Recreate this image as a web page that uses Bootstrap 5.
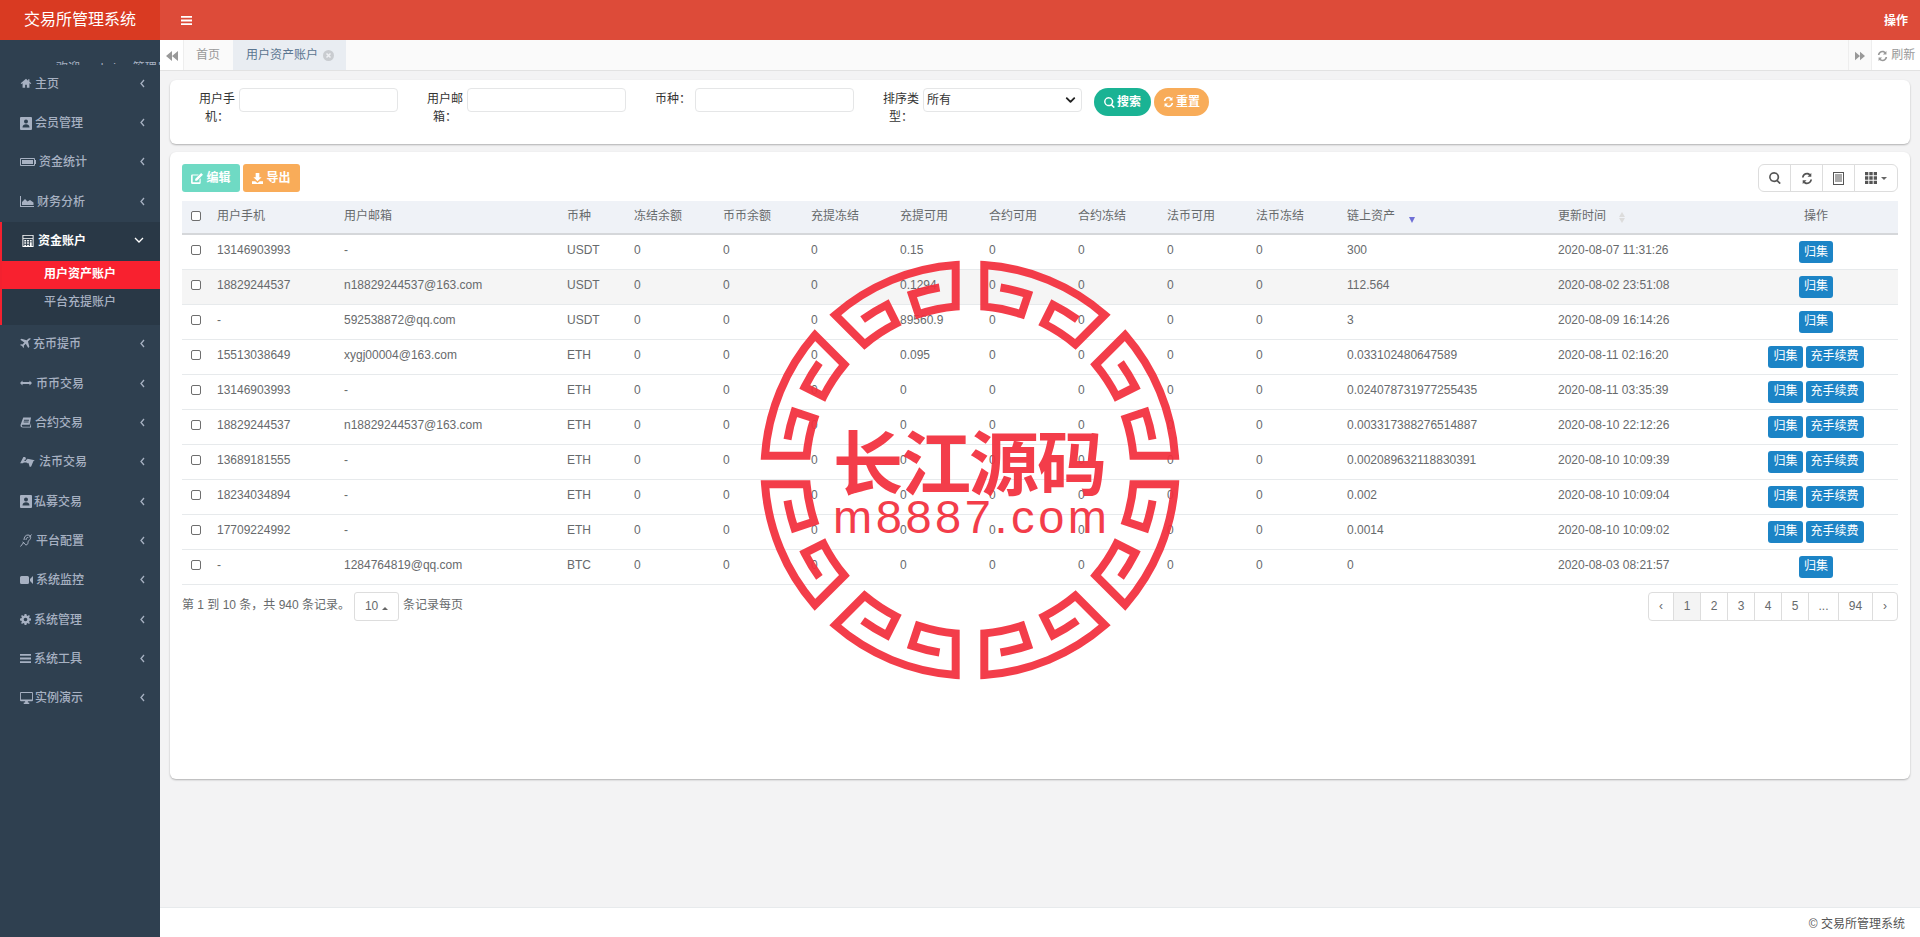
<!DOCTYPE html>
<html lang="zh-CN">
<head>
  <meta charset="UTF-8">
  <title>交易所管理系统</title>
  <link href="https://cdn.jsdelivr.net/npm/bootstrap@5.3.3/dist/css/bootstrap.min.css" rel="stylesheet">
  <style>
    html, body {
      height: 100%;
      overflow: hidden;
    }

    body {
      font-family: "Liberation Sans", "Noto Sans CJK SC", sans-serif;
      font-size: 12px;
      color: #676a6c;
      background: #f3f3f4;
    }

    .app-wrap {
      position: relative;
      height: 937px;
    }

    /* sidebar */
    .side-col {
      width: 160px;
      flex: none;
      background: #2f4050;
      color: #a7b1c2;
    }

    .side-logo {
      height: 40px;
      line-height: 39px;
      text-align: center;
      font-size: 16px;
      color: #fff;
      background: #d93a22;
    }

    .side-clip {
      height: 24.7px;
      overflow: hidden;
      padding-top: 21px;
      padding-left: 56px;
      line-height: 14px;
      white-space: nowrap;
    }

    .side-item {
      height: 39.33px;
      line-height: 38px;
      padding-left: 20px;
      padding-right: 15px;
      font-weight: 500;
    }

    .side-item svg.ico {
      fill: #a7b1c2;
      margin-right: 2px;
      flex: none;
    }

    .side-open {
      background: #293846;
      border-left: 2px solid #f3212f;
    }

    .side-open .side-item {
      color: #fff;
      font-weight: 700;
      padding-left: 20px;
      padding-right: 16px;
    }

    .side-open .side-item svg.ico {
      fill: #fff;
    }

    .sub-list {
      padding-bottom: 8px;
    }

    .sub-link {
      height: 28px;
      line-height: 27px;
      text-align: center;
      padding-right: 2px;
      font-weight: 500;
    }

    .sub-on {
      background: #f8212f;
      color: #fff;
      font-weight: 700;
    }

    .side-arrow {
      margin-left: auto;
      stroke: #a7b1c2;
    }

    .side-open .side-arrow {
      stroke: #fff;
    }

    /* top */
    .top-bar {
      height: 40px;
      background: #dd4b39;
      color: #fff;
      padding: 0 12px 0 21px;
    }

    .top-act {
      font-weight: 700;
      margin-left: auto;
      margin-top: 2px;
    }

    .tab-strip {
      height: 31px;
      background: #fafafa;
      border-bottom: 1px solid #e2e2e2;
      color: #999;
      line-height: 30px;
    }

    .tab-btn {
      background: #fff;
      border-right: 1px solid #eee;
      width: 24px;
      text-align: center;
    }

    .tab-btn svg {
      fill: #999;
    }

    .tab-one {
      padding: 0 12px;
      width: 49px;
      white-space: nowrap;
    }

    .tab-active {
      width: 113px;
      padding: 0 12px 0 13px;
      background: #e9edf2;
      color: #5a7590;
    }

    .tab-close {
      display: inline-block;
      margin-left: 5px;
      vertical-align: -2px;
    }

    .tab-right {
      margin-left: auto;
    }

    .tab-next {
      border-left: 1px solid #eee;
      border-right: 1px solid #eee;
      background: #fafafa;
    }

    .tab-refresh {
      width: 48px;
      background: #fff;
      white-space: nowrap;
      padding-left: 5px;
    }

    /* panels */
    .page-body {
      padding: 9px 10px 0;
    }

    .panel-box {
      background: #fff;
      border-radius: 6px;
      box-shadow: 0 1px 2px rgba(0, 0, 0, .28);
    }

    .search-box {
      height: 64px;
      padding: 8px 0 0 27px;
      margin-bottom: 8px;
      color: #333;
    }

    .search-lab {
      width: 40px;
      text-align: center;
      line-height: 17.5px;
      margin-right: 2px;
      padding-top: 3px;
    }

    .lab-rest { margin-left: 27px; }

    .search-input {
      width: 159px;
      height: 24px;
      min-height: 24px;
      padding: 0 3px;
      font-size: 12px;
      border: 1px solid #e5e6e7;
      border-radius: 4px;
      color: #333;
    }

    .search-input.form-select {
      padding-right: 20px;
      background-position: right 4px center;
      background-size: 13px 10px;
      --bs-form-select-bg-img: url("data:image/svg+xml,%3csvg xmlns='http://www.w3.org/2000/svg' viewBox='0 0 16 16'%3e%3cpath fill='none' stroke='%23222' stroke-linecap='round' stroke-linejoin='round' stroke-width='3' d='m2 5 6 6 6-6'/%3e%3c/svg%3e");
    }

    .pill-btn {
      height: 28px;
      padding: 0 6px;
      font-size: 12px;
      font-weight: 700;
      color: #fff;
      border: 0;
      border-radius: 14px;
      display: inline-flex;
      align-items: center;
      gap: 2px;
    }

    .pill-green { background: #1ab394; width: 57px; margin-left: 12px; justify-content: center; }
    .pill-orange { background: #f8ac59; width: 55px; margin-left: 3px; justify-content: center; }

    .table-box {
      height: 627px;
      padding: 12px 12px 0;
    }

    .tool-row {
      height: 28px;
      margin-bottom: 9px;
    }

    .act-btn {
      height: 28px;
      padding: 0;
      font-size: 12px;
      font-weight: 700;
      color: #fff;
      border: 0;
      border-radius: 3px;
      display: inline-flex;
      align-items: center;
      justify-content: center;
      gap: 3px;
    }

    .act-edit { width: 58px; background: #6fdac4; }
    .act-out { width: 57px; background: #f9ac59; margin-left: 3px; }

    .tool-group {
      margin-left: auto;
    }

    .tool-group .btn {
      height: 28px;
      padding: 0;
      width: 33px;
      background: #fff;
      border-color: #ddd;
      color: #555;
      font-size: 12px;
      display: inline-flex;
      align-items: center;
      justify-content: center;
    }

    .tool-group .btn:last-child {
      width: 44px;
    }

    .caret-mini {
      display: inline-block;
      border-left: 3px solid transparent;
      border-right: 3px solid transparent;
      border-top: 3px solid #666;
      margin-left: 4px;
    }

    .caret-up {
      border-top: 0;
      border-bottom: 3px solid #666;
    }

    .data-grid {
      table-layout: fixed;
      width: 1716px;
      margin: 0;
      font-size: 12px;
      color: #676a6c;
      --bs-table-color: #676a6c;
    }

    .data-grid th {
      height: 33px;
      padding: 7px 8px 0;
      font-weight: 400;
      background: #eff2f7;
      border-bottom: 2px solid #d5d7da;
      vertical-align: top;
      white-space: nowrap;
      line-height: 17px;
    }

    .data-grid td {
      height: 35px;
      padding: 7px 8px 0;
      line-height: 17px;
      border-bottom: 1px solid #e7eaec;
      vertical-align: top;
      white-space: nowrap;
    }

    .data-grid td.op-cell,
    .data-grid th.op-cell {
      text-align: center;
      padding-left: 0;
      padding-right: 0;
    }

    .data-grid td.op-cell {
      padding-top: 6px;
    }

    .data-grid tr.row-hover td {
      background: #f5f5f5;
    }

    .check-box {
      display: block;
      width: 10px;
      height: 10px;
      margin: 3px 0 0;
      border: 1px solid #6e6e6e;
      border-radius: 2px;
      background: #fff;
      appearance: none;
    }

    .data-grid th .check-box {
      margin-top: 3px;
    }

    .data-grid .cell-check {
      padding-left: 9px;
      padding-right: 0;
    }

    .w-a { width: 27px; }
    .w-b { width: 127px; }
    .w-c { width: 223px; }
    .w-d { width: 67px; }
    .w-e { width: 89px; }
    .w-f { width: 88px; }
    .w-g { width: 91px; }
    .w-h { width: 211px; }
    .w-i { width: 184px; }
    .w-j { width: 164px; }

    .op-btn {
      height: 22px;
      padding: 0 5px;
      font-size: 12px;
      line-height: 21px;
      color: #fff;
      background: #1c84c6;
      border: 0;
      border-radius: 3px;
      margin: 0 1.500px;
    }

    .sort-down,
    .sort-both {
      display: inline-block;
      position: relative;
      width: 7px;
      height: 10px;
      vertical-align: -3px;
    }

    .sort-down { margin-left: 14px; }
    .sort-both { margin-left: 13px; }

    .sort-down::after,
    .sort-both::after {
      content: "";
      position: absolute;
      left: 0;
      bottom: 0;
      border-left: 3.5px solid transparent;
      border-right: 3.5px solid transparent;
      border-top: 6px solid #6f6fd6;
    }

    .sort-both::after { border-top: 5px solid #dcdcdc; }

    .sort-both::before {
      content: "";
      position: absolute;
      left: 0;
      top: -1px;
      border-left: 3.5px solid transparent;
      border-right: 3.5px solid transparent;
      border-bottom: 5px solid #dcdcdc;
    }

    .foot-row {
      margin-top: 7px;
    }

    .foot-note {
      margin-top: -3px;
    }

    .size-btn {
      width: 45px;
      height: 29px;
      margin: 0 4px 0 4px;
      padding: 0;
      font-size: 12px;
      color: #676a6c;
      background: #fff;
      border: 1px solid #ddd;
      border-radius: 3px;
    }

    .page-list {
      margin: 0 0 0 auto;
      --bs-pagination-font-size: 12px;
      --bs-pagination-color: #676a6c;
      --bs-pagination-border-color: #ddd;
      --bs-pagination-active-bg: #f4f4f4;
      --bs-pagination-active-color: #676a6c;
      --bs-pagination-active-border-color: #ddd;
    }

    .page-list .page-link {
      height: 29px;
      width: 28px;
      padding: 0;
      line-height: 27px;
      text-align: center;
      border-radius: 0;
    }

    .page-list .page-item:first-child .page-link {
      width: 26px;
      border-radius: 4px 0 0 4px;
    }

    .page-list .page-item:last-child .page-link {
      width: 26px;
      border-radius: 0 4px 4px 0;
    }

    .page-list .page-dots { width: 31px; }
    .page-list .page-wide { width: 35px; }

    .page-foot {
      height: 30px;
      background: #fff;
      border-top: 1px solid #e7eaec;
      padding-right: 15px;
      line-height: 33px;
      text-align: right;
      color: #555;
      flex: none;
    }

    /* stamp that lies over the table */
    .stamp {
      position: absolute;
      left: 750px;
      top: 250px;
      pointer-events: none;
      opacity: .93;
    }

    .stamp-ring {
      fill: none;
      stroke: #f32f3d;
      stroke-width: 8;
      stroke-linejoin: miter;
      stroke-linecap: butt;
    }

    .stamp-cn {
      font-family: "Noto Sans CJK SC", sans-serif;
      font-weight: 700;
      font-size: 70px;
      fill: #f32f3d;
    }

    .stamp-en {
      font-family: "Liberation Sans", sans-serif;
      font-size: 47px;
      fill: #f32f3d;
    }
  </style>
</head>
<body>

<svg width="0" height="0" class="d-none">
  <symbol id="i-home" viewBox="0 0 14 14"><path d="M7 2 .8 7.4l.8.9L3 7.2V12.5h3V9h2v3.500h3V7.200l1.400 1.100.8-.9-2.200-1.900V2.500H9.500v1.800z"/></symbol>
  <symbol id="i-card" viewBox="0 0 12 14"><path fill-rule="evenodd" d="M1 1h10a1 1 0 0 1 1 1v11a1 1 0 0 1-1 1H1a1 1 0 0 1-1-1V2a1 1 0 0 1 1-1zm5 2.500a2 2 0 1 0 0 4 2 2 0 0 0 0-4zM2.500 11.500h7C9.500 9.500 8 8.300 6 8.300s-3.500 1.200-3.500 3.200z"/></symbol>
  <symbol id="i-batt" viewBox="0 0 16 10"><path fill-rule="evenodd" d="M1 1h13a1 1 0 0 1 1 1v1h1v4h-1v1a1 1 0 0 1-1 1H1a1 1 0 0 1-1-1V2a1 1 0 0 1 1-1zm0 1v6h13V2z"/><rect x="2" y="3" width="11" height="4"/></symbol>
  <symbol id="i-area" viewBox="0 0 14 11"><path d="M0 0h1v10h13v1H0z"/><path d="M2 9V6l3-3 2.500 2.500L10 4l3.500 2.500V9z"/></symbol>
  <symbol id="i-calc" viewBox="0 0 12 14"><path fill-rule="evenodd" d="M0 1h12v13H0zm1 1v2.500h10V2zm0 3.500v7.500h10V5.500z"/><path d="M2 6.500h2v1.500H2zm3 0h2v1.500H5zm3 0h2v1.500H8zM2 9h2v1.500H2zm3 0h2v1.500H5zm3 0h2v4H8zm-6 2.500h2V13H2zm3 0h2V13H5z"/></symbol>
  <symbol id="i-plane" viewBox="0 0 12 12"><path d="M11.500.5c-.7-.7-2-.3-2.800.5L7.300 2.400 1.500.8.300 2l4.500 2.800-2.200 2.200-1.500-.3L0 7.500l2.300 1.300L3.600 11l.8-1.100-.3-1.500 2.200-2.200L9 10.800 10.200 9.600 8.700 3.800l1.400-1.400c.8-.8 2-1.300 1.400-1.900z"/></symbol>
  <symbol id="i-arrows" viewBox="0 0 12 6"><path d="M0 3l2.500-2.500V2h7V.5L12 3 9.500 5.500V4h-7v1.500z"/></symbol>
  <symbol id="i-book" viewBox="0 0 12 12"><path fill-rule="evenodd" d="M3 .5h8.500L10 8.500H2.500C1.800 8.500 1.500 9 1.500 9.500s.3 1 1 1h7.800l1.200-4v5h-9C1 11.500 0 10.500 0 9.300c0-.3 0-.6.1-.9zM3.800 3v1h5.400V3zm-.4 2v1h5.400V5z"/></symbol>
  <symbol id="i-law" viewBox="0 0 16 12"><path d="M0 8 3.500 1h2L7 4.500 8 3l8 1.500-1.500 1-2.500 6-1.500.5L9 7.500 7.500 8 7 7H4l-1 1zm4.500-2.500h2L5.500 3z"/></symbol>
  <symbol id="i-deaf" viewBox="0 0 12 13"><path fill="none" stroke="#a7b1c2" d="M4 6c0-3 1.500-5 4-5s3 2 2.500 3.500S8 6.500 8 8.500 6.500 11.500 5 10.500M6 6c0-1.500.5-2.500 2-2.500M11.500.5l-2.500 3M4 8l-3.500 4.500M2.500 8l2.500 2"/></symbol>
  <symbol id="i-video" viewBox="0 0 13 10"><path d="M1.500 1h6A1.500 1.500 0 0 1 9 2.500v5A1.500 1.500 0 0 1 7.500 9h-6A1.500 1.500 0 0 1 0 7.500v-5A1.500 1.500 0 0 1 1.500 1zM10 4l3-3v8l-3-3z"/></symbol>
  <symbol id="i-cog" viewBox="0 0 12 12"><path fill-rule="evenodd" d="M5 0h2l.3 1.600 1.100.5L9.800 1.200l1 1-.9 1.400.5 1.100L12 5v2l-1.600.3-.5 1.100.9 1.400-1 1-1.400-.9-1.100.5L7 12H5l-.3-1.600-1.100-.5-1.400.9-1-1 .9-1.400-.5-1.100L0 7V5l1.600-.3.500-1.100-.9-1.400 1-1 1.400.9 1.100-.5zm1 4a2 2 0 1 0 0 4 2 2 0 0 0 0-4z"/></symbol>
  <symbol id="i-bars" viewBox="0 0 11 9"><path d="M0 0h11v1.800H0zm0 3.600h11v1.800H0zm0 3.600h11V9H0z"/></symbol>
  <symbol id="i-desk" viewBox="0 0 14 13"><path fill-rule="evenodd" d="M1 0h12a1 1 0 0 1 1 1v8a1 1 0 0 1-1 1H8.500v1.500H10V13H4v-1.500h1.500V10H1a1 1 0 0 1-1-1V1a1 1 0 0 1 1-1zm0 1v7h12V1z"/></symbol>
  <symbol id="i-search" viewBox="0 0 13 13"><path fill-rule="evenodd" d="M5.500 0a5.500 5.500 0 0 1 4.300 8.900l3 3-1.300 1.300-3-3A5.500 5.500 0 1 1 5.500 0zm0 1.800a3.700 3.700 0 1 0 0 7.400 3.700 3.700 0 0 0 0-7.400z"/></symbol>
  <symbol id="i-sync" viewBox="0 0 12 13"><path d="M10.300 1v3.800H6.500L8 3.300C7.400 2.800 6.800 2.500 6 2.500 4.300 2.500 3 3.800 2.700 5.500H.9C1.200 2.800 3.300.8 6 .8c1.300 0 2.400.5 3.200 1.300zM1.700 12V8.200h3.800L4 9.700c.6.500 1.200.8 2 .8 1.700 0 3-1.300 3.300-3h1.800C10.800 10.200 8.700 12.200 6 12.200c-1.300 0-2.400-.5-3.200-1.300z"/></symbol>
  <symbol id="i-list" viewBox="0 0 11 13"><path fill-rule="evenodd" d="M0 0h11v13H0zm1 1v11h9V1zm1 1.500h7v1H2zm0 2h7v1H2zm0 2h7v1H2zm0 2h7v1H2z"/></symbol>
  <symbol id="i-grid" viewBox="0 0 12 12"><path d="M0 0h3.300v3.300H0zm4.300 0h3.400v3.300H4.300zm4.400 0H12v3.300H8.700zM0 4.300h3.300v3.400H0zm4.300 0h3.400v3.400H4.300zm4.400 0H12v3.400H8.700zM0 8.700h3.300V12H0zm4.300 0h3.400V12H4.300zm4.400 0H12V12H8.700z"/></symbol>
  <symbol id="i-edit" viewBox="0 0 13 12"><path fill-rule="evenodd" d="M1.500 1.500h7l-1.300 1.300H1.800v7.400h7.400V7l1.300-1.300v5a1.300 1.300 0 0 1-1.300 1.300H1.500A1.500 1.500 0 0 1 0 10.500v-7.500A1.500 1.500 0 0 1 1.500 1.500zM11 0l2 2-6.500 6.500H4.500v-2z"/></symbol>
  <symbol id="i-down" viewBox="0 0 12 12"><path d="M4 0h4v4.500h2.500L6 9 1.500 4.500H4zM0 9h3.500L6 11l2.500-2H12v3H0z"/></symbol>
</svg>

<div class="app-wrap d-flex">
  <aside class="side-col d-flex flex-column">
    <div class="side-logo">交易所管理系统</div>
    <div class="side-clip">欢迎&nbsp;&nbsp;&nbsp;admin&nbsp;&nbsp;&nbsp;管理员</div>
    <div id="sideMenu"></div>
  </aside>

  <main class="flex-fill d-flex flex-column min-w-0">
    <div class="top-bar d-flex align-items-center">
      <svg width="11" height="9"><use href="#i-bars" fill="#fff"/></svg>
      <span class="top-act">操作</span>
    </div>

    <div class="tab-strip d-flex">
      <div class="tab-btn">
        <svg width="12" height="10" viewBox="0 0 12 10"><path d="M6 0v10L0 5zm6 0v10L6 5z"/></svg>
      </div>
      <div class="tab-one">首页</div>
      <div class="tab-one tab-active">用户资产账户<svg class="tab-close" width="11" height="11" viewBox="0 0 11 11"><circle cx="5.500" cy="5.500" r="5.500" fill="#c9ccd0"/><path d="M3.500 3.500l4 4m0-4l-4 4" stroke="#eef0f3" stroke-width="1.500"/></svg></div>
      <div class="tab-btn tab-next tab-right">
        <svg width="10" height="10" viewBox="0 0 12 10"><path d="M0 0v10L6 5zm6 0v10L12 5z"/></svg>
      </div>
      <div class="tab-refresh"><svg width="11" height="12"><use href="#i-sync" fill="#999"/></svg> 刷新</div>
    </div>

    <div class="page-body flex-fill">
      <form class="panel-box search-box d-flex align-items-start">
        <label class="search-lab">用户手机：</label>
        <input class="form-control search-input" type="text">
        <label class="search-lab lab-rest">用户邮箱：</label>
        <input class="form-control search-input" type="text">
        <label class="search-lab lab-rest">币种：</label>
        <input class="form-control search-input" type="text">
        <label class="search-lab lab-rest">排序类型：</label>
        <select class="form-select search-input"><option>所有</option></select>
        <button type="button" class="pill-btn pill-green"><svg width="11" height="11"><use href="#i-search" fill="#fff"/></svg>搜索</button>
        <button type="button" class="pill-btn pill-orange"><svg width="11" height="12"><use href="#i-sync" fill="#fff"/></svg>重置</button>
      </form>

      <section class="panel-box table-box">
        <div class="tool-row d-flex">
          <button type="button" class="act-btn act-edit"><svg width="12" height="11"><use href="#i-edit" fill="#fff"/></svg>编辑</button>
          <button type="button" class="act-btn act-out"><svg width="11" height="11"><use href="#i-down" fill="#fff"/></svg>导出</button>
          <div class="btn-group tool-group">
            <button type="button" class="btn"><svg width="12" height="12"><use href="#i-search" fill="#555"/></svg></button>
            <button type="button" class="btn"><svg width="12" height="13"><use href="#i-sync" fill="#555"/></svg></button>
            <button type="button" class="btn"><svg width="11" height="13"><use href="#i-list" fill="#555"/></svg></button>
            <button type="button" class="btn"><svg width="12" height="12"><use href="#i-grid" fill="#555"/></svg><span class="caret-mini"></span></button>
          </div>
        </div>

        <table class="table data-grid">
          <colgroup>
            <col class="w-a"><col class="w-b"><col class="w-c"><col class="w-d">
            <col class="w-e"><col class="w-f"><col class="w-e"><col class="w-e">
            <col class="w-e"><col class="w-e"><col class="w-e"><col class="w-g">
            <col class="w-h"><col class="w-i"><col class="w-j">
          </colgroup>
          <thead>
            <tr>
              <th class="cell-check"><input type="checkbox" class="check-box"></th>
              <th>用户手机</th><th>用户邮箱</th><th>币种</th><th>冻结余额</th><th>币币余额</th>
              <th>充提冻结</th><th>充提可用</th><th>合约可用</th><th>合约冻结</th><th>法币可用</th>
              <th>法币冻结</th>
              <th>链上资产<span class="sort-down"></span></th>
              <th>更新时间<span class="sort-both"></span></th>
              <th class="op-cell">操作</th>
            </tr>
          </thead>
          <tbody id="gridBody"></tbody>
        </table>

        <div class="foot-row d-flex align-items-center">
          <span class="foot-note">第 1 到 10 条，共 940 条记录。</span>
          <button type="button" class="size-btn">10<span class="caret-mini caret-up"></span></button>
          <span class="foot-note">条记录每页</span>
          <ul class="pagination page-list">
            <li class="page-item"><a class="page-link" href="#">‹</a></li>
            <li class="page-item active"><a class="page-link" href="#">1</a></li>
            <li class="page-item"><a class="page-link" href="#">2</a></li>
            <li class="page-item"><a class="page-link" href="#">3</a></li>
            <li class="page-item"><a class="page-link" href="#">4</a></li>
            <li class="page-item"><a class="page-link" href="#">5</a></li>
            <li class="page-item"><a class="page-link page-dots" href="#">...</a></li>
            <li class="page-item"><a class="page-link page-wide" href="#">94</a></li>
            <li class="page-item"><a class="page-link" href="#">›</a></li>
          </ul>
        </div>
      </section>
    </div>

    <footer class="page-foot">© 交易所管理系统</footer>
  </main>

  <svg class="stamp" width="440" height="440" viewBox="0 0 440 440">
    <g id="stampRing"></g>
    <text class="stamp-cn" x="83" y="240" textLength="274" lengthAdjust="spacing">长江源码</text>
    <text class="stamp-en" x="83" y="283" textLength="274" lengthAdjust="spacing">m8887.com</text>
  </svg>
</div>

<script>
  // sidebar: label, icon id, icon width, icon height, gap to the text
  const menu = [
    ["主页", "i-home", 12, 12, 1],
    ["会员管理", "i-card", 12, 14, 1],
    ["资金统计", "i-batt", 16, 10, 1],
    ["财务分析", "i-area", 14, 11, 1],
    ["资金账户", "i-calc", 12, 13, 2, ["用户资产账户", "平台充提账户"]],
    ["充币提币", "i-plane", 11, 11, 0],
    ["币币交易", "i-arrows", 12, 6, 2],
    ["合约交易", "i-book", 12, 11, 1],
    ["法币交易", "i-law", 15, 11, 2],
    ["私募交易", "i-card", 12, 14, 0],
    ["平台配置", "i-deaf", 12, 13, 2],
    ["系统监控", "i-video", 13, 10, 1],
    ["系统管理", "i-cog", 11, 11, 1],
    ["系统工具", "i-bars", 11, 9, 1],
    ["实例演示", "i-desk", 13, 12, 0]
  ];

  const sideMenu = document.getElementById("sideMenu");
  let sideHtml = "";
  menu.forEach(m => {
    const open = !!m[5];
    const arrow = open ? "M1 1l4 4 4-4" : "M4 1 1 4.500 4 8";
    const item = `<div class="side-item d-flex align-items-start">
      <svg class="ico" width="${m[2]}" height="${m[3]}" style="margin-top:${(37 - m[3]) / 2}px;margin-right:${m[4] + 2}px"><use href="#${m[1]}"/></svg>
      <span>${m[0]}</span>
      <svg class="side-arrow" width="${open ? 10 : 5}" height="${open ? 6 : 9}" style="margin-top:${open ? 15 : 14}px" fill="none" stroke-width="1.300"><path d="${arrow}"/></svg>
    </div>`;
    if (open) {
      const subs = m[5].map((s, i) => `<div class="sub-link ${i === 0 ? "sub-on" : ""}">${s}</div>`).join("");
      sideHtml += `<div class="side-open">${item}<div class="sub-list">${subs}</div></div>`;
    } else {
      sideHtml += item;
    }
  });
  sideMenu.innerHTML = sideHtml;

  // table rows: phone, mail, coin, charge available, chain assets, time, has fee button
  const rows = [
    ["13146903993", "-", "USDT", "0.15", "300", "2020-08-07 11:31:26", false],
    ["18829244537", "n18829244537@163.com", "USDT", "0.1294", "112.564", "2020-08-02 23:51:08", false],
    ["-", "592538872@qq.com", "USDT", "89560.9", "3", "2020-08-09 16:14:26", false],
    ["15513038649", "xygj00004@163.com", "ETH", "0.095", "0.033102480647589", "2020-08-11 02:16:20", true],
    ["13146903993", "-", "ETH", "0", "0.024078731977255435", "2020-08-11 03:35:39", true],
    ["18829244537", "n18829244537@163.com", "ETH", "0", "0.003317388276514887", "2020-08-10 22:12:26", true],
    ["13689181555", "-", "ETH", "0", "0.002089632118830391", "2020-08-10 10:09:39", true],
    ["18234034894", "-", "ETH", "0", "0.002", "2020-08-10 10:09:04", true],
    ["17709224992", "-", "ETH", "0", "0.0014", "2020-08-10 10:09:02", true],
    ["-", "1284764819@qq.com", "BTC", "0", "0", "2020-08-03 08:21:57", false]
  ];

  document.getElementById("gridBody").innerHTML = rows.map((r, i) => `
    <tr class="${i === 1 ? "row-hover" : ""}">
      <td class="cell-check"><input type="checkbox" class="check-box"></td>
      <td>${r[0]}</td><td>${r[1]}</td><td>${r[2]}</td>
      <td>0</td><td>0</td><td>0</td><td>${r[3]}</td><td>0</td><td>0</td><td>0</td><td>0</td>
      <td>${r[4]}</td><td>${r[5]}</td>
      <td class="op-cell"><button type="button" class="op-btn">归集</button>${r[6] ? '<button type="button" class="op-btn">充手续费</button>' : ""}</td>
    </tr>`).join("");

  // stamp ring: eight key-pattern pieces, every piece turned by 45 degrees
  function pt(r, deg) {
    const a = (deg - 90) * Math.PI / 180;
    return (220 + r * Math.cos(a)).toFixed(1) + " " + (220 + r * Math.sin(a)).toFixed(1);
  }

  function arc(r, deg, cw) {
    return `A${r} ${r} 0 0 ${cw ? 1 : 0} ${pt(r, deg)}`;
  }

  let ringPaths = "";
  for (let k = 0; k < 8; k++) {
    const o = k * 45;
    const d = `M${pt(185, o + 9.500)} ${arc(185, o + 18.300, true)} L${pt(164, o + 18.300)} ${arc(164, o + 5)} L${pt(205.500, o + 4)} ` +
      `${arc(205.500, o + 41, true)} L${pt(164, o + 40)} ${arc(164, o + 26.700)} L${pt(185, o + 26.700)} ${arc(185, o + 35.500, true)}`;
    ringPaths += `<path class="stamp-ring" d="${d}"/>`;
  }
  document.getElementById("stampRing").innerHTML = ringPaths;
</script>

<script src="https://cdn.jsdelivr.net/npm/bootstrap@5.3.3/dist/js/bootstrap.bundle.min.js"></script>
</body>
</html>
